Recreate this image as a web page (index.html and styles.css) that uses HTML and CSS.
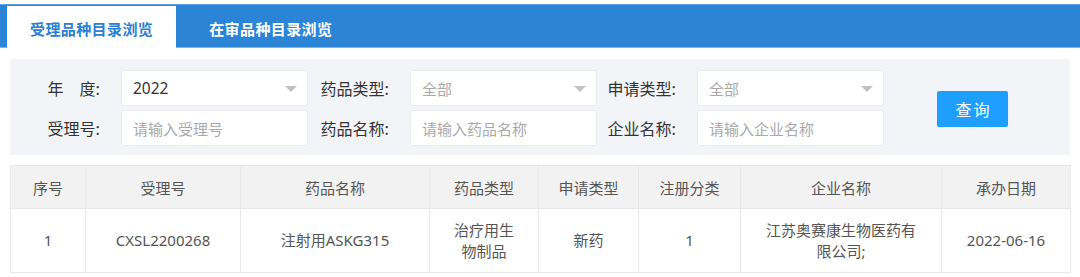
FILE: index.html
```html
<!DOCTYPE html>
<html lang="zh-CN">
<head>
<meta charset="utf-8">
<title>受理品种目录浏览</title>
<link rel="stylesheet" href="styles.css">
</head>
<body>
<div class="tabs">
  <div class="tab active">受理品种目录浏览</div>
  <div class="tab">在审品种目录浏览</div>
</div>
<div class="panel">
  <div class="form">
    <div class="label">年　度:</div>
    <div class="field select"><span class="value">2022</span><i class="arrow"></i></div>
    <div class="label">药品类型:</div>
    <div class="field select"><span class="ph">全部</span><i class="arrow"></i></div>
    <div class="label">申请类型:</div>
    <div class="field select"><span class="ph">全部</span><i class="arrow"></i></div>
    <div class="btn-cell"><button class="btn">查询</button></div>
    <div class="label">受理号:</div>
    <div class="field"><span class="ph">请输入受理号</span></div>
    <div class="label">药品名称:</div>
    <div class="field"><span class="ph">请输入药品名称</span></div>
    <div class="label">企业名称:</div>
    <div class="field"><span class="ph">请输入企业名称</span></div>
  </div>
</div>
<table class="grid">
  <colgroup>
    <col class="c1"><col class="c2"><col class="c3"><col class="c4"><col class="c5"><col class="c6"><col class="c7"><col class="c8">
  </colgroup>
  <thead>
    <tr><th>序号</th><th>受理号</th><th>药品名称</th><th>药品类型</th><th>申请类型</th><th>注册分类</th><th>企业名称</th><th>承办日期</th></tr>
  </thead>
  <tbody>
    <tr><td>1</td><td>CXSL2200268</td><td>注射用ASKG315</td><td>治疗用生物制品</td><td>新药</td><td>1</td><td>江苏奥赛康生物医药有限公司;</td><td>2022-06-16</td></tr>
  </tbody>
</table>
</body>
</html>
```

FILE: styles.css
```css
* { box-sizing: border-box; }
html, body { margin: 0; padding: 0; background: #fff; }
body {
  font-family: "Noto Sans", "Noto Sans CJK SC", sans-serif;
  color: #333;
  font-size: 15px;
}
.tabs {
  margin-top: 4px;
  height: 44px;
  background: #2b84d6;
  border-top: 1px solid #5b9fe0;
  border-bottom: 1px solid #7ab3e8;
  display: flex;
  align-items: flex-end;
  padding-left: 7px;
}
.tab {
  height: 40px;
  padding: 3px 23px 0;
  display: flex;
  align-items: center;
  font-family: "Noto Sans CJK SC", sans-serif;
  font-size: 15px;
  font-weight: 700;
  letter-spacing: 0.4px;
  color: #fff;
}
.tab.active {
  background: #fff;
  color: #2b80d2;
  height: 42px;
  margin-bottom: -1px;
}
.tab + .tab { padding-left: 33px; }
.panel {
  margin: 11px 10px 0;
  background: #f3f4f8;
  padding: 11px 0 9px 10px;
}
.form {
  display: grid;
  grid-template-columns: 101px 187px 102px 187px 100px 187px auto;
  grid-template-rows: 36px 36px;
  row-gap: 4px;
}
.label {
  text-align: right;
  padding-right: 21px;
  align-self: center;
  white-space: nowrap;
  font-family: "Noto Sans CJK SC", sans-serif;
  font-size: 16px;
  color: #333;
}
.field {
  background: #fff;
  border: 1px solid #ebecef;
  border-radius: 3px;
  display: flex;
  align-items: center;
  padding: 0 11px;
  position: relative;
  font-family: "Noto Sans CJK SC", sans-serif;
  font-size: 15px;
}
.value { color: #333; font-family: "Noto Sans", sans-serif; font-size: 15.5px; }
.ph { color: #a9a9a9; }
.arrow {
  position: absolute;
  right: 10px;
  top: 15px;
  width: 0;
  height: 0;
  border-left: 6px solid transparent;
  border-right: 6px solid transparent;
  border-top: 6px solid #c2c2c2;
}
.btn-cell {
  grid-column: 7;
  grid-row: 1 / span 2;
  align-self: center;
  padding-left: 53px;
  padding-top: 2px;
}
.btn {
  width: 71px;
  height: 36px;
  border: 0;
  border-radius: 2px;
  background: #1e9fff;
  color: #fff;
  font-family: "Noto Sans CJK SC", sans-serif;
  font-size: 16px;
  letter-spacing: 2px;
  padding: 0 0 0 2px;
}
.grid {
  margin: 10px 10px 0;
  width: 1060px;
  table-layout: fixed;
  border-collapse: collapse;
  font-family: "Noto Sans", "Noto Sans CJK SC", sans-serif;
  font-size: 15px;
}
.c1 { width: 75px; }
.c2 { width: 155px; }
.c3 { width: 189px; }
.c4 { width: 109px; }
.c5 { width: 100px; }
.c6 { width: 102px; }
.c7 { width: 201px; }
.c8 { width: 129px; }
.grid th, .grid td {
  border: 1px solid #e8e8e8;
  text-align: center;
  padding: 0 20px;
}
.grid th {
  background: #f2f2f2;
  height: 43px;
  padding: 0 4px;
  white-space: nowrap;
  font-weight: 400;
  color: #555;
  font-family: "Noto Sans CJK SC", sans-serif;
}
.grid td {
  height: 64px;
  line-height: 21px;
  color: #555;
}
```
